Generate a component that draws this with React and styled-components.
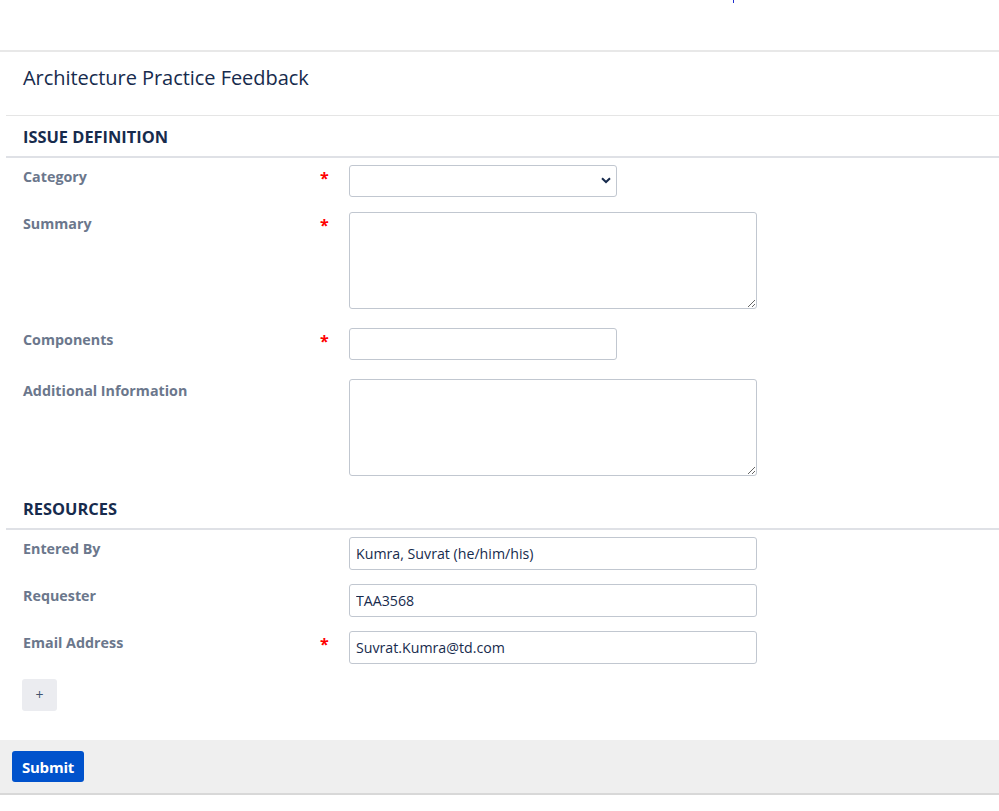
import styled, { createGlobalStyle } from "styled-components";

const GlobalStyle = createGlobalStyle`
  html, body {
    margin: 0;
    padding: 0;
    background: #ffffff;
    font-family: "Open Sans", "Noto Sans", Arial, sans-serif;
    color: #172b4d;
  }
`;

const TopBar = styled.div`
  height: 50px;
  border-bottom: 2px solid #e8e8e8;
  position: relative;
`;

// tiny cursor-like mark at the top of the page
const Mark = styled.span`
  position: absolute;
  left: 733px;
  top: 0;
  width: 1px;
  height: 3px;
  background: #1f2fd0;
`;

const Content = styled.div`
  padding-left: 6px;
`;

const Title = styled.h1`
  margin: 0;
  padding: 14px 17px 25px;
  font-size: 20px;
  line-height: 24px;
  font-weight: 400;
  color: #172b4d;
  letter-spacing: -0.05px;
  border-bottom: 1px solid #e5e5e5;
`;

const SectionHeading = styled.h2`
  margin: ${(p) => p.$top || 0}px 0 0;
  padding: 10px 17px 8px;
  font-size: 16.4px;
  line-height: 22px;
  font-weight: 700;
  color: #172b4d;
  border-bottom: 2px solid #dfe1e6;
`;

const Rows = styled.div`
  padding: 7px 0 0 17px;
`;

const Row = styled.div`
  display: flex;
  align-items: flex-start;
  margin-bottom: ${(p) => p.$gap ?? 15}px;
`;

const Label = styled.label`
  width: 297px;
  padding-top: 2px;
  font-size: 14.3px;
  line-height: 20px;
  font-weight: 700;
  color: #6b778c;
`;

const Req = styled.span`
  width: 29px;
  padding-top: 3px;
  font-size: 16px;
  line-height: 20px;
  font-weight: 700;
  color: #ff0000;
`;

const fieldBase = `
  box-sizing: border-box;
  border: 1px solid #c1c7d0;
  border-radius: 3px;
  background: #ffffff;
  font-family: "Open Sans", "Noto Sans", Arial, sans-serif;
  font-size: 14.2px;
  color: #172b4d;
  padding: 0 6px;
  outline: none;
`;

const TextInput = styled.input`
  ${fieldBase}
  display: block;
  width: ${(p) => p.$w || 408}px;
  height: ${(p) => p.$h || 33}px;
`;

const Area = styled.textarea`
  ${fieldBase}
  display: block;
  width: 408px;
  height: 97px;
  resize: both;
`;

const SelectWrap = styled.div`
  position: relative;
  width: 268px;
  height: 32px;
`;

const Select = styled.select`
  ${fieldBase}
  display: block;
  width: 100%;
  height: 100%;
  appearance: none;
`;

const Chevron = styled.svg`
  position: absolute;
  right: 6px;
  top: 12px;
  pointer-events: none;
`;

const AddButton = styled.button`
  display: block;
  width: 35px;
  height: 32px;
  margin: 0 0 29px 22px;
  border: none;
  border-radius: 3px;
  background: #ebecf0;
  color: #42526e;
  font-family: "Open Sans", Arial, sans-serif;
  font-size: 14px;
  line-height: 1;
  padding: 0;
`;

const Footer = styled.div`
  background: #efefef;
  border-bottom: 2px solid #d8d8d8;
  padding: 11px 12px 11px;
`;

const SubmitButton = styled.button`
  display: block;
  height: 31px;
  width: 72px;
  border: none;
  border-radius: 3px;
  background: #0052cc;
  color: #ffffff;
  font-family: "Open Sans", Arial, sans-serif;
  font-size: 15px;
  font-weight: 700;
  padding: 0;
  letter-spacing: -0.2px;
`;

const Field = ({ label, required, children, gap }) => (
  <Row $gap={gap}>
    <Label>{label}</Label>
    <Req>{required ? "*" : ""}</Req>
    {children}
  </Row>
);

const App = () => {
  return (
    <>
      <GlobalStyle />
      <TopBar>
        <Mark />
      </TopBar>
      <Content>
        <Title>Architecture Practice Feedback</Title>
        <SectionHeading>ISSUE DEFINITION</SectionHeading>
        <Rows>
          <Field label="Category" required>
            <SelectWrap>
              <Select defaultValue="">
                <option value=""></option>
              </Select>
              <Chevron width="10" height="7" viewBox="0 0 10 7">
                <path d="M1 1.2 L5 5 L9 1.2" fill="none" stroke="#172b4d" strokeWidth="2" />
              </Chevron>
            </SelectWrap>
          </Field>
          <Field label="Summary" required gap={19}>
            <Area />
          </Field>
          <Field label="Components" required gap={19}>
            <TextInput $w={268} $h={32} />
          </Field>
          <Field label="Additional Information" gap={0}>
            <Area />
          </Field>
        </Rows>
        <SectionHeading $top={12}>RESOURCES</SectionHeading>
        <Rows>
          <Field label="Entered By" gap={14}>
            <TextInput defaultValue="Kumra, Suvrat (he/him/his)" />
          </Field>
          <Field label="Requester" gap={14}>
            <TextInput defaultValue="TAA3568" />
          </Field>
          <Field label="Email Address" required>
            <TextInput defaultValue="Suvrat.Kumra@td.com" />
          </Field>
        </Rows>
      </Content>
      <AddButton>+</AddButton>
      <Footer>
        <SubmitButton>Submit</SubmitButton>
      </Footer>
    </>
  );
};

export default App;
